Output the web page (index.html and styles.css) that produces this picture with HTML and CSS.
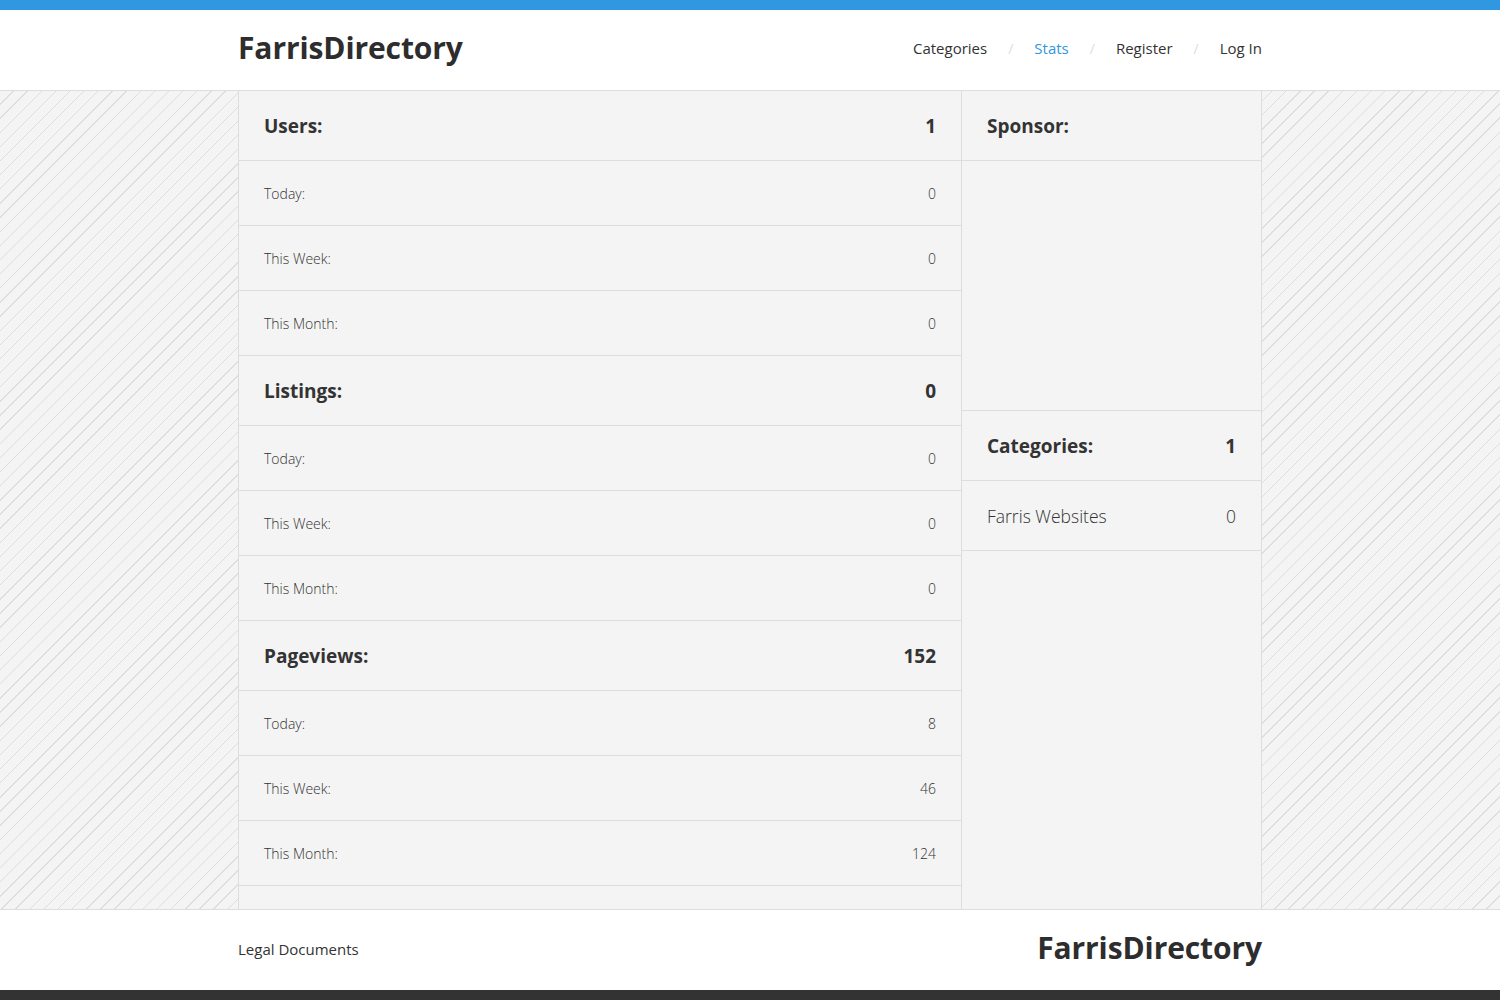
FILE: index.html
```
<!DOCTYPE html>
<html lang="en">
<head>
  <meta charset="UTF-8" />
  <meta name="viewport" content="width=device-width, initial-scale=1.0"/>
  <title>FarrisDirectory - Stats</title>
  <link rel="stylesheet" href="styles.css">
</head>
<body>
  <div class="top-bar"></div>

  <header class="site-header">
    <div class="wrap header-inner">
      <a class="logo" href="#">FarrisDirectory</a>
      <nav class="nav">
        <a href="#">Categories</a>
        <span class="sep">/</span>
        <a href="#" class="active">Stats</a>
        <span class="sep">/</span>
        <a href="#">Register</a>
        <span class="sep">/</span>
        <a href="#">Log In</a>
      </nav>
    </div>
  </header>

  <main class="stage">
    <div class="wrap columns">
      <section class="main-col">
        <div class="row head"><span>Users:</span><span>1</span></div>
        <div class="row"><span>Today:</span><span>0</span></div>
        <div class="row"><span>This Week:</span><span>0</span></div>
        <div class="row"><span>This Month:</span><span>0</span></div>

        <div class="row head"><span>Listings:</span><span>0</span></div>
        <div class="row"><span>Today:</span><span>0</span></div>
        <div class="row"><span>This Week:</span><span>0</span></div>
        <div class="row"><span>This Month:</span><span>0</span></div>

        <div class="row head"><span>Pageviews:</span><span>152</span></div>
        <div class="row"><span>Today:</span><span>8</span></div>
        <div class="row"><span>This Week:</span><span>46</span></div>
        <div class="row"><span>This Month:</span><span>124</span></div>

        <div class="row head"></div>
      </section>

      <aside class="side-col">
        <div class="row head"><span>Sponsor:</span></div>
        <div class="sponsor"></div>
        <div class="row head"><span>Categories:</span><span>1</span></div>
        <div class="row cat"><span>Farris Websites</span><span>0</span></div>
      </aside>
    </div>
  </main>

  <footer class="site-footer">
    <div class="wrap footer-inner">
      <a href="#" class="legal">Legal Documents</a>
      <a class="logo" href="#">FarrisDirectory</a>
    </div>
  </footer>

  <div class="bottom-bar"></div>
</body>
</html>
```

FILE: styles.css
```
html, body {
  height: 100%;
}

body {
  margin: 0;
  display: flex;
  flex-direction: column;
  font-family: 'Open Sans', 'Liberation Sans', sans-serif;
  color: #333;
  background: #fff;
}

a {
  color: #333;
  text-decoration: none;
}

.wrap {
  width: 1024px;
  margin: 0 auto;
}

.top-bar {
  height: 10px;
  background: #3097e1;
  flex-shrink: 0;
}

.bottom-bar {
  height: 10px;
  background: #333;
  flex-shrink: 0;
}

/* header */
.site-header {
  height: 80px;
  border-bottom: 1px solid #ddd;
  flex-shrink: 0;
}

.header-inner {
  height: 100%;
  display: flex;
  align-items: center;
  justify-content: space-between;
}

.logo {
  font-size: 30px;
  font-weight: 700;
  letter-spacing: -0.1px;
  color: #2d2d2d;
  margin-top: -6px;
}

.nav {
  display: flex;
  align-items: center;
  gap: 21px;
  font-size: 15px;
  margin-top: -4px;
}

.nav .active {
  color: #3097e1;
}

.nav .sep {
  color: #ddd;
  font-size: 14px;
}

/* stats area */
.stage {
  flex: 1;
  overflow: hidden;
  background-color: #f4f4f4;
  background-image: repeating-linear-gradient(135deg, #f4f4f4 0, #f4f4f4 9px, #dedede 9px, #dedede 10px);
}

.columns {
  display: flex;
  height: 100%;
  background: #f4f4f4;
}

.main-col {
  flex: 1;
  border-left: 1px solid #ddd;
  border-right: 1px solid #ddd;
}

.side-col {
  width: 299px;
  border-right: 1px solid #ddd;
}

.row {
  height: 64px;
  border-bottom: 1px solid #ddd;
  display: flex;
  align-items: center;
  justify-content: space-between;
  padding: 0 25px;
  font-size: 14px;
  font-weight: 300;
}

.row.head {
  height: 69px;
  font-size: 19px;
  font-weight: 700;
}

.row.cat {
  height: 69px;
  font-size: 17.5px;
  font-weight: 300;
}

.sponsor {
  height: 249px;
  border-bottom: 1px solid #ddd;
}

/* footer */
.site-footer {
  height: 80px;
  border-top: 1px solid #ddd;
  flex-shrink: 0;
}

.footer-inner {
  height: 100%;
  display: flex;
  align-items: center;
  justify-content: space-between;
}

.footer-inner .logo {
  margin-top: -6px;
}

.legal {
  font-size: 15px;
  margin-top: -2px;
}
```
